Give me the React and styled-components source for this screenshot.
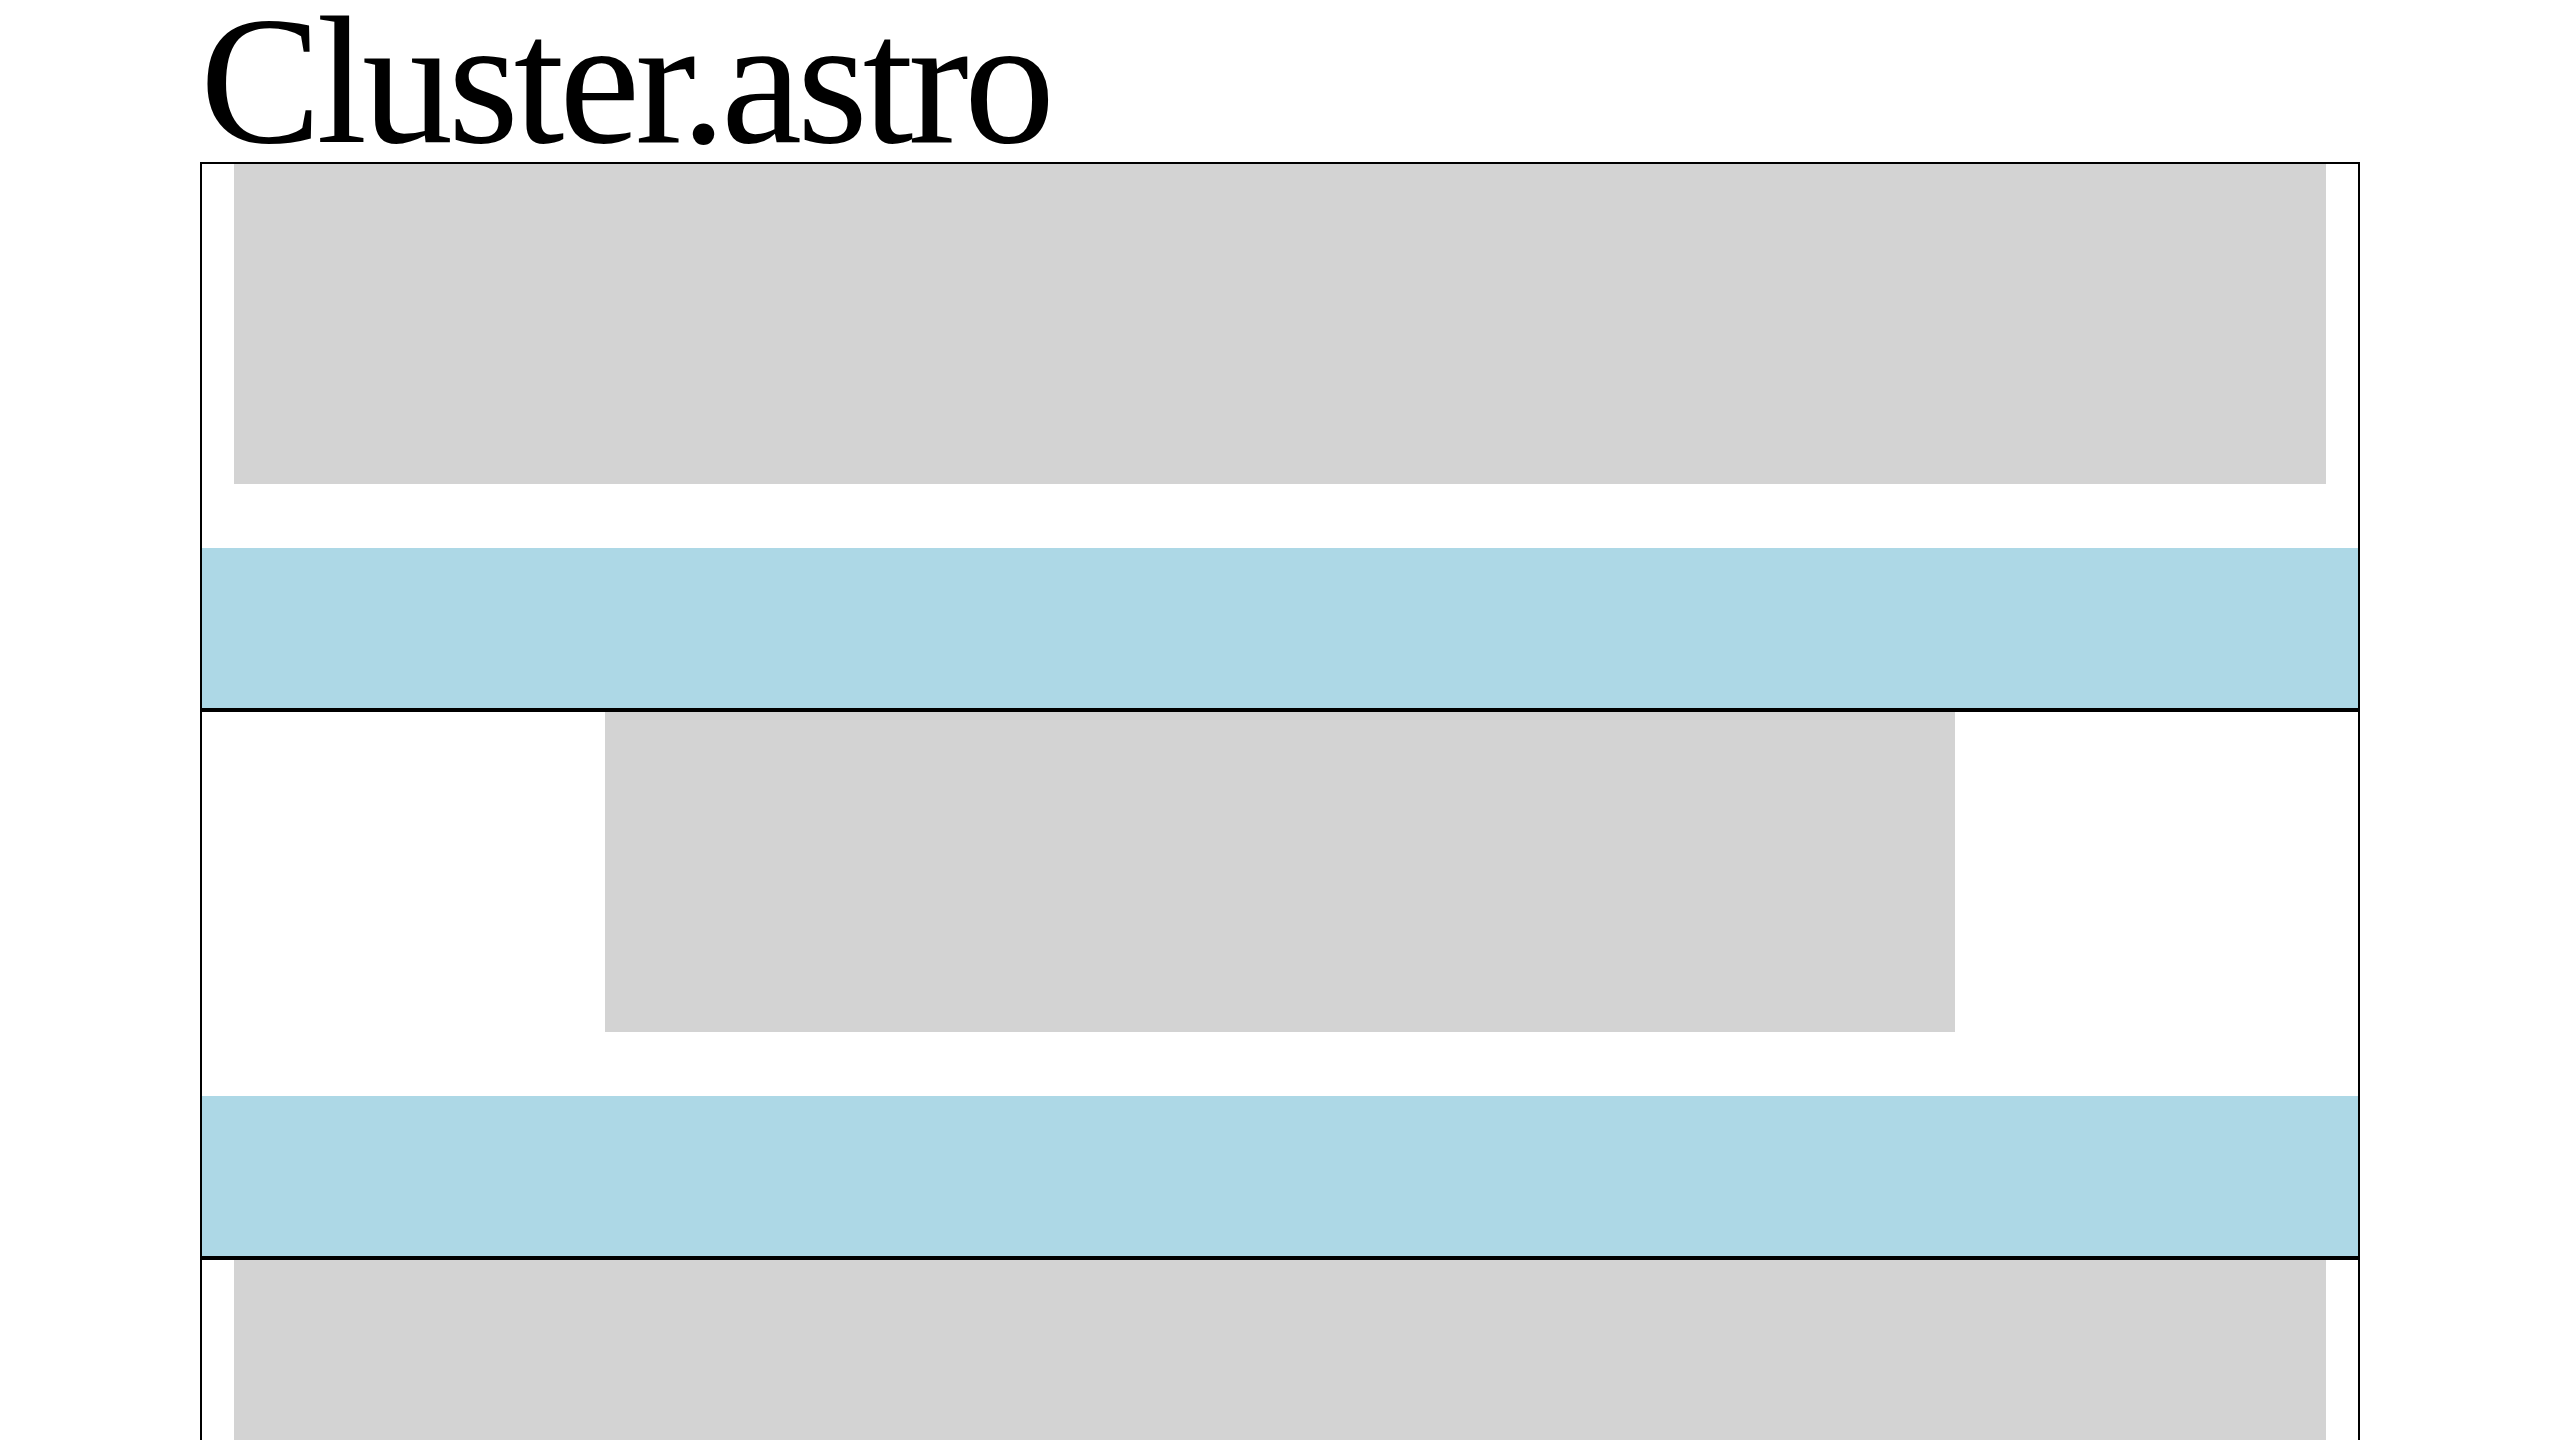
import { createGlobalStyle, styled } from "styled-components";

const GlobalStyle = createGlobalStyle`
    html, body {
        margin: 0;
        padding: 0;
        background: #ffffff;
    }
    body {
        font-family: "Liberation Serif", "Times New Roman", serif;
        color: #000000;
    }
`

const Page = styled.main`
    width: 2160px;
    margin: 0 auto;
`

const Titulo = styled.h1`
    margin: 0;
    font-family: "Liberation Serif", "Times New Roman", serif;
    font-weight: 400;
    font-size: 182px;
    line-height: 162px;
    letter-spacing: -5px;
`

const Cluster = styled.section`
    display: flex;
    flex-direction: column;
    align-items: center;
    gap: 64px;
    border: 2px solid #000000;
`

const Caixa = styled.div`
    width: ${(props) => (props.$estreita ? "1350px" : "calc(100% - 64px)")};
    height: 320px;
    background: lightgray;
`

const Faixa = styled.div`
    align-self: stretch;
    height: 160px;
    background: lightblue;
`

const clusters = [
    { id: 1, estreita: false },
    { id: 2, estreita: true },
    { id: 3, estreita: false },
    { id: 4, estreita: true },
]

const App = () => {
    return (
        <>
            <GlobalStyle />
            <Page>
                <Titulo>Cluster.astro</Titulo>
                {clusters.map((cluster) => (
                    <Cluster key={cluster.id}>
                        <Caixa $estreita={cluster.estreita} />
                        <Faixa />
                    </Cluster>
                ))}
            </Page>
        </>
    )
}

export default App
